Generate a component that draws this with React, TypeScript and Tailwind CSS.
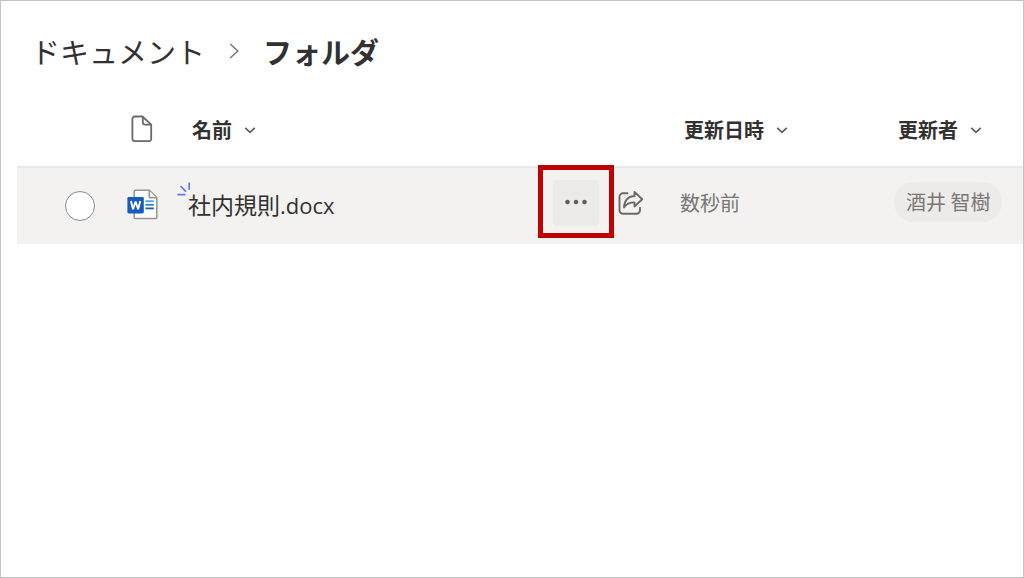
import type { ReactNode } from "react";

const jp = "font-['Noto_Sans_CJK_JP','Noto_Sans',sans-serif]";

function ChevronDown() {
  return (
    <svg viewBox="0 0 12 12" className="size-3 shrink-0" fill="none" stroke="#605e5c" strokeWidth="1.7" aria-hidden="true">
      <path d="M1.2 3.8 6 8.4l4.8-4.6" />
    </svg>
  );
}

function ChevronRight() {
  return (
    <svg viewBox="0 0 10 16" className="h-4 w-2.5 shrink-0" fill="none" stroke="#797775" strokeWidth="1.5" aria-hidden="true">
      <path d="M1.2 1 8.8 8l-7.6 7" />
    </svg>
  );
}

function PageIcon() {
  return (
    <svg viewBox="0 0 22 28" className="h-7 w-[22px]" fill="none" stroke="#6b6967" strokeWidth="1.8" strokeLinejoin="round" aria-hidden="true">
      <path d="M3.800 1.500h7.700l8.700 8.200v14.100a2.200 2.200 0 0 1-2.200 2.400H3.800a2.400 2.400 0 0 1-2.400-2.400V3.800a2.300 2.300 0 0 1 2.400-2.300Z" />
      <path d="M11.800 1.700v5.600a2.400 2.400 0 0 0 2.400 2.400H20" />
    </svg>
  );
}

function WordIcon() {
  return (
    <svg viewBox="0 0 31 31" className="size-[31px]" fill="none" role="img" aria-label="Word">
      <path d="M8.2 1.2h14.2l7.4 7.4v20c0 .6-.4 1-1 1H8.2c-.6 0-1-.4-1-1V2.200c0-.6.4-1 1-1Z" fill="#fff" stroke="#979593" strokeWidth="1.5" />
      <path d="M22.200 1.400v6.400c0 .6.4 1 1 1h6.300" fill="#f3f2f1" stroke="#979593" strokeWidth="1.5" />
      <path d="M18.500 12.200h8.300" stroke="#41a5ee" strokeWidth="1.800" />
      <path d="M18.500 15.800h8.300" stroke="#2b7cd3" strokeWidth="1.800" />
      <path d="M18.500 19.400h8.300" stroke="#185abd" strokeWidth="1.800" />
      <rect x=".4" y="8" width="16.400" height="16.400" rx="1.300" fill="#185abd" />
      <path d="m3.900 12 2.200 8.300L8.600 12.500l2.500 7.800L13.300 12" stroke="#fff" strokeWidth="1.900" strokeLinejoin="bevel" />
    </svg>
  );
}

function NewMark() {
  return (
    <svg viewBox="0 0 14 14" className="absolute -top-1.5 -left-[11px] size-3.5" fill="none" stroke="#5b78f5" strokeWidth="1.700" strokeLinecap="round" aria-hidden="true">
      <path d="M12.200 1v6.200M4 4.500l4.500 4.700M1 12.600h6.800" />
    </svg>
  );
}

function ShareIcon() {
  return (
    <svg viewBox="0 0 26 26" className="size-[26px]" fill="none" stroke="#6b6967" strokeWidth="1.900" strokeLinejoin="round" strokeLinecap="round" aria-hidden="true">
      <path d="M9.500 3.300H5A3.500 3.500 0 0 0 1.500 6.800v13.500A3.500 3.500 0 0 0 5 23.800h13.500a3.500 3.500 0 0 0 3.500-3.500v-2.300" />
      <path d="M16.500 2 24.200 9.200l-7.700 7.300v-4.100c-4.800-.1-7.900 1.300-10.500 5 .5-6.600 4.300-11 10.500-11.400Z" />
    </svg>
  );
}

function ColumnButton({ children }: { children: ReactNode }) {
  return (
    <button type="button" className="flex items-center gap-3 px-1 text-xl leading-7 font-bold">
      {children}
      <ChevronDown />
    </button>
  );
}

export default function App() {
  return (
    <main className={`${jp} min-h-screen border border-[#c4c4c4] bg-white pt-[30px] pl-4 text-[#323130]`}>
      <nav aria-label="breadcrumb" className="pl-3.5">
        <ol className="flex h-10 items-center text-[29px] leading-10">
          <li>
            <a href="#documents">ドキュメント</a>
          </li>
          <li className="flex items-center px-6">
            <ChevronRight />
          </li>
          <li className="font-bold" aria-current="page">
            フォルダ
          </li>
        </ol>
      </nav>

      <table className="mt-[22px] w-full table-fixed border-collapse text-left">
        <colgroup>
          <col className="w-[110px]" />
          <col className="w-[61px]" />
          <col />
          <col className="w-[214px]" />
          <col className="w-[129px]" />
        </colgroup>
        <thead>
          <tr className="h-[74px] border-b-2 border-[#ebe9e8]">
            <td />
            <th scope="col" className="pb-0.5 pl-1" aria-label="種類">
              <PageIcon />
            </th>
            <th scope="col">
              <ColumnButton>名前</ColumnButton>
            </th>
            <th scope="col">
              <ColumnButton>更新日時</ColumnButton>
            </th>
            <th scope="col">
              <ColumnButton>更新者</ColumnButton>
            </th>
          </tr>
        </thead>
        <tbody>
          <tr className="h-[77px] bg-[#f3f2f1]">
            <td className="pl-12">
              <input
                type="checkbox"
                aria-label="社内規則.docx"
                className="block size-[30px] appearance-none rounded-full border border-[#8a8886] bg-white checked:bg-[#0078d4]"
              />
            </td>
            <td className="pb-1">
              <WordIcon />
            </td>
            <td className="pb-0.5">
              <div className="flex items-center">
                <div className="relative flex-1 pb-0.5">
                  <NewMark />
                  <a href="#file" className="text-[23px] leading-8">
                    社内規則<span className="font-['Open_Sans',sans-serif] text-[22px]">.docx</span>
                  </a>
                </div>
                <div className="flex items-center pr-9 pb-1">
                  <div className="relative mr-[19px]">
                    <button type="button" aria-label="その他" className="flex size-[46px] items-center justify-center rounded bg-[#edebe9] pb-0.5">
                      <svg viewBox="0 0 22 6" className="h-1.5 w-[22px]" fill="#605e5c" aria-hidden="true">
                        <circle cx="2.500" cy="3" r="2.300" />
                        <circle cx="11" cy="3" r="2.300" />
                        <circle cx="19.500" cy="3" r="2.300" />
                      </svg>
                    </button>
                    <span className="pointer-events-none absolute -inset-x-[15px] -top-[15px] -bottom-3 border-[5px] border-[#c00000]" />
                  </div>
                  <button type="button" aria-label="共有">
                    <ShareIcon />
                  </button>
                </div>
              </div>
            </td>
            <td className="pb-1.5 text-xl leading-7 text-[#797775]">数秒前</td>
            <td className="pb-2">
              <button type="button" className="h-10 rounded-full bg-[#edebe9] px-3 text-xl leading-7 whitespace-nowrap text-[#797775]">
                酒井 智樹
              </button>
            </td>
          </tr>
        </tbody>
      </table>
    </main>
  );
}
